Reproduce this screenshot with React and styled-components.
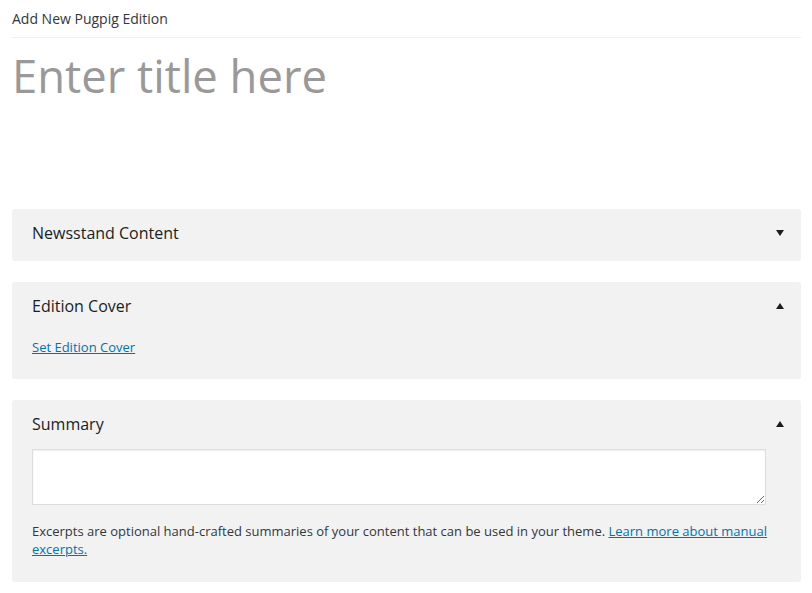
import React from "react";
import styled, { createGlobalStyle } from "styled-components";

const Global = createGlobalStyle`
  html, body { margin: 0; padding: 0; background: #fafafa; }
  body { font-family: "Open Sans", "Noto Sans", sans-serif; color: #23282d; }
`;

const Page = styled.div`
  background: #fff;
  padding: 0 11px 11px 12px;
  min-height: 582px;
  box-sizing: border-box;
`;

const Header = styled.div`
  height: 38px;
  box-sizing: border-box;
  border-bottom: 1px solid #f0f0f0;
  font-size: 14px;
  line-height: 38px;
  color: #32373c;
`;

const TitleInput = styled.input`
  display: block;
  width: 100%;
  box-sizing: border-box;
  border: none;
  outline: none;
  background: transparent;
  font-family: "Open Sans", "Noto Sans", sans-serif;
  font-size: 45.4px;
  color: #999;
  padding: 0;
  margin: 11px 0 0;
  height: 52px;
  line-height: 52px;
  &::placeholder { color: #999; opacity: 1; }
`;

const Panels = styled.div`
  display: flex;
  flex-direction: column;
  gap: 21px;
  margin-top: 108px;
`;

const Panel = styled.section`
  background: #f2f2f2;
  border-radius: 3px;
  padding: 0 17px ${(p) => p.$pb || 0}px 20px;
`;

const PanelHead = styled.div`
  display: flex;
  align-items: center;
  justify-content: space-between;
  height: 48px;
  font-size: 16px;
  color: #191e23;
`;

const Arrow = styled.span`
  width: 0;
  height: 0;
  border-left: 4px solid transparent;
  border-right: 4px solid transparent;
  ${(p) =>
    p.$up
      ? "border-bottom: 6px solid #191e23;"
      : "border-top: 6px solid #191e23;"}
`;

const Link = styled.a`
  color: #0073aa;
  text-decoration: underline;
  font-size: 13px;
  line-height: 18px;
`;

const LinkRow = styled.div`
  padding-top: 8px;
  font-size: 13px;
  line-height: 18px;
`;

const Textarea = styled.textarea`
  display: block;
  width: 734px;
  height: 56px;
  box-sizing: border-box;
  border: 1px solid #ddd;
  box-shadow: inset 0 1px 2px rgba(0, 0, 0, 0.07);
  background: #fff;
  margin: 1px 0 0;
  resize: vertical;
  font-family: "Open Sans", sans-serif;
  font-size: 13px;
`;

const Help = styled.p`
  margin: 17px 0 0;
  font-size: 13px;
  line-height: 18px;
  color: #32373c;
`;

export default function App() {
  return (
    <>
      <Global />
      <Page>
        <Header>Add New Pugpig Edition</Header>
        <TitleInput placeholder="Enter title here" />
        <Panels>
          <Panel $pb={4}>
            <PanelHead>
              <span>Newsstand Content</span>
              <Arrow />
            </PanelHead>
          </Panel>
          <Panel $pb={23}>
            <PanelHead>
              <span>Edition Cover</span>
              <Arrow $up />
            </PanelHead>
            <LinkRow>
              <Link href="#">Set Edition Cover</Link>
            </LinkRow>
          </Panel>
          <Panel $pb={24}>
            <PanelHead>
              <span>Summary</span>
              <Arrow $up />
            </PanelHead>
            <Textarea />
            <Help>
              Excerpts are optional hand-crafted summaries of your content that can be used in your theme.{" "}
              <Link href="#">Learn more about manual excerpts.</Link>
            </Help>
          </Panel>
        </Panels>
      </Page>
    </>
  );
}
